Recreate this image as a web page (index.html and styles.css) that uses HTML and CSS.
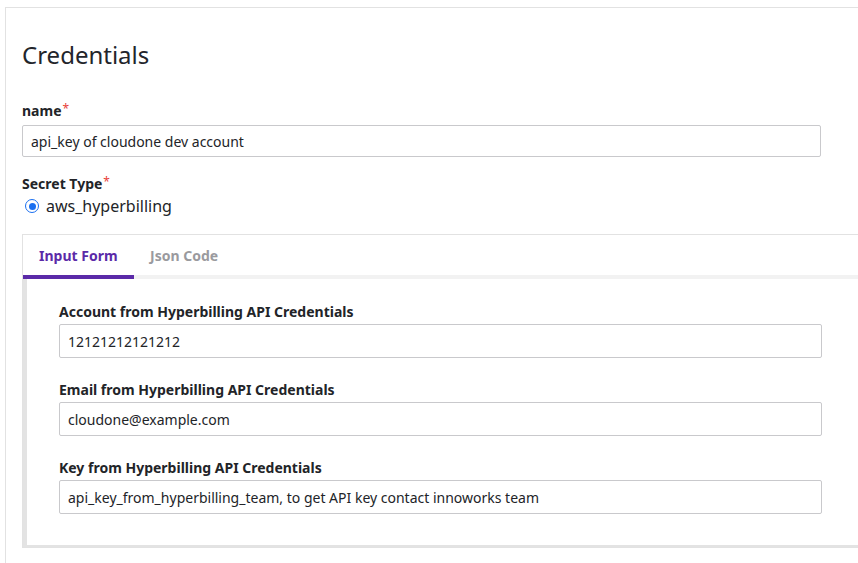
FILE: index.html
```html
<!DOCTYPE html>
<html lang="en">
<head>
<meta charset="utf-8">
<title>Credentials</title>
<link rel="stylesheet" href="styles.css">
</head>
<body>
<div class="card">
  <h1 class="title">Credentials</h1>

  <div class="field">
    <label class="label">name<span class="req">*</span></label>
    <div class="input input-name">api_key of cloudone dev account</div>
  </div>

  <div class="field field-type">
    <label class="label">Secret Type<span class="req">*</span></label>
    <div class="radio-row">
      <span class="radio"><span class="radio-dot"></span></span>
      <span class="radio-text">aws_hyperbilling</span>
    </div>
  </div>

  <div class="tabs">
    <div class="tab-bar">
      <div class="tab tab-active">Input Form</div>
      <div class="tab">Json Code</div>
    </div>
    <div class="panel">
      <div class="pfield">
        <label class="label">Account from Hyperbilling API Credentials</label>
        <div class="input input-panel">12121212121212</div>
      </div>
      <div class="pfield">
        <label class="label">Email from Hyperbilling API Credentials</label>
        <div class="input input-panel">cloudone@example.com</div>
      </div>
      <div class="pfield">
        <label class="label">Key from Hyperbilling API Credentials</label>
        <div class="input input-panel">api_key_from_hyperbilling_team, to get API key contact innoworks team</div>
      </div>
    </div>
  </div>
</div>
</body>
</html>
```

FILE: styles.css
```css
* { box-sizing: border-box; }

html, body {
  margin: 0;
  padding: 0;
  background: #ffffff;
  overflow: hidden;
}

body {
  font-family: "Noto Sans", "Open Sans", sans-serif;
  color: #222428;
  width: 858px;
  height: 563px;
}

.card {
  margin: 7px 0 0 5px;
  height: 556px;
  border: 1px solid #e2e2e2;
  border-right: none;
  border-bottom: none;
  background: #fff;
  padding: 29px 0 0 16px;
}

.title {
  margin: 0;
  font-size: 24px;
  font-weight: 400;
  line-height: 36px;
  color: #23252b;
}

.field {
  margin-top: 28px;
}

.field-type {
  margin-top: 17px;
}

.label {
  display: block;
  font-size: 14px;
  font-weight: 700;
  line-height: 20px;
  color: #222428;
}

.req {
  color: #e8413a;
  font-weight: 400;
  margin-left: 1px;
  font-size: 12px;
  line-height: 0;
  vertical-align: 3px;
}

.input {
  border: 1px solid #c9c9cc;
  border-radius: 2px;
  font-size: 14px;
  color: #222428;
  display: flex;
  align-items: center;
  padding-left: 8px;
  background: #fff;
}

.input-name {
  margin-top: 4px;
  width: 799px;
  height: 32px;
}

.radio-row {
  display: flex;
  align-items: center;
  height: 22px;
  margin-top: 1px;
}

.radio {
  width: 14px;
  height: 14px;
  border: 1.5px solid #1a6ff0;
  border-radius: 50%;
  margin-left: 3px;
  margin-right: 7px;
  display: flex;
  align-items: center;
  justify-content: center;
}

.radio-dot {
  width: 7px;
  height: 7px;
  border-radius: 50%;
  background: #1a6ff0;
}

.radio-text {
  font-size: 16px;
  line-height: 22px;
  color: #222428;
}

.tabs {
  margin-top: 17px;
  border: 1px solid #e2e2e2;
  border-right: none;
}

.tab-bar {
  display: flex;
  border-bottom: 4px solid #f2f2f2;
  height: 44px;
}

.tab {
  font-size: 14px;
  font-weight: 700;
  line-height: 20px;
  padding: 11px 16px 0 16px;
  color: #9a9a9e;
  height: 44px;
}

.tab-active {
  color: #5b2aa8;
  border-bottom: 4px solid #5b2aa8;
  margin-bottom: -4px;
  width: 111px;
}

.panel {
  border-left: 4px solid #e3e3e3;
  border-bottom: 2px solid #e3e3e3;
  padding: 23px 32px 31px 32px;
}

.pfield + .pfield {
  margin-top: 22px;
}

.input-panel {
  margin-top: 2px;
  width: 763px;
  height: 34px;
}
```
